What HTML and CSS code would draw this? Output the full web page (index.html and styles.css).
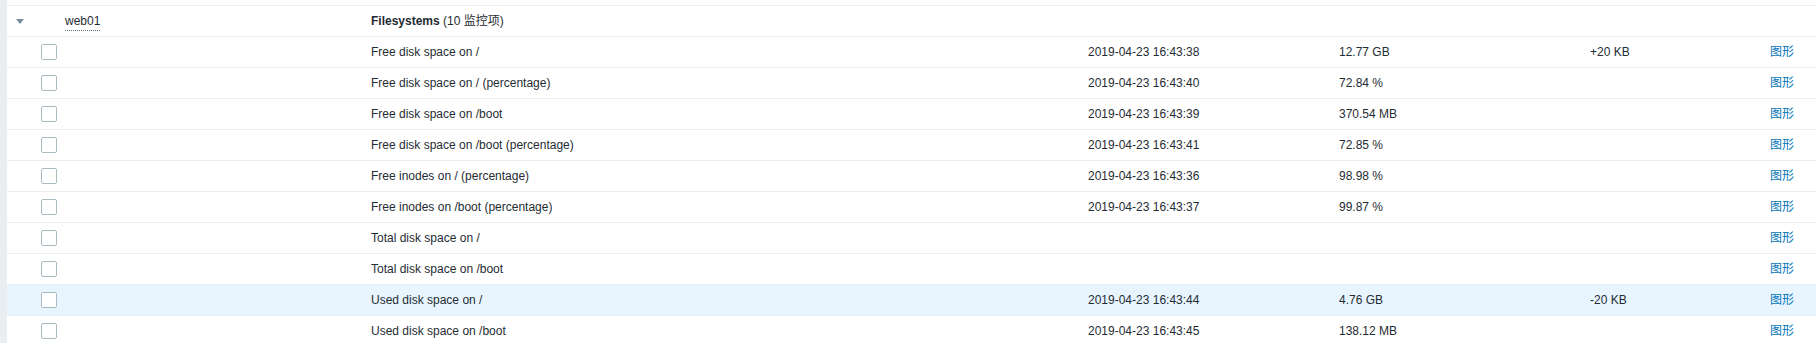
FILE: index.html
```html
<!DOCTYPE html>
<html>
<head>
<meta charset="utf-8">
<link rel="stylesheet" href="styles.css">
</head>
<body>
<div class="page">
  <div class="content">
    <table class="list">
      <colgroup>
        <col class="c-toggle"><col class="c-check"><col class="c-host"><col class="c-name"><col class="c-time"><col class="c-value"><col class="c-change"><col class="c-graph">
      </colgroup>
      <tbody>
        <tr class="group">
          <td><span class="arrow-down"></span></td>
          <td></td>
          <td><span class="link-action">web01</span></td>
          <td><b>Filesystems</b> (10 监控项)</td>
          <td></td><td></td><td></td><td></td>
        </tr>
        <tr><td></td><td><span class="checkbox"></span></td><td></td><td>Free disk space on /</td><td>2019-04-23 16:43:38</td><td>12.77 GB</td><td>+20 KB</td><td><a class="link">图形</a></td></tr>
        <tr><td></td><td><span class="checkbox"></span></td><td></td><td>Free disk space on / (percentage)</td><td>2019-04-23 16:43:40</td><td>72.84 %</td><td></td><td><a class="link">图形</a></td></tr>
        <tr><td></td><td><span class="checkbox"></span></td><td></td><td>Free disk space on /boot</td><td>2019-04-23 16:43:39</td><td>370.54 MB</td><td></td><td><a class="link">图形</a></td></tr>
        <tr><td></td><td><span class="checkbox"></span></td><td></td><td>Free disk space on /boot (percentage)</td><td>2019-04-23 16:43:41</td><td>72.85 %</td><td></td><td><a class="link">图形</a></td></tr>
        <tr><td></td><td><span class="checkbox"></span></td><td></td><td>Free inodes on / (percentage)</td><td>2019-04-23 16:43:36</td><td>98.98 %</td><td></td><td><a class="link">图形</a></td></tr>
        <tr><td></td><td><span class="checkbox"></span></td><td></td><td>Free inodes on /boot (percentage)</td><td>2019-04-23 16:43:37</td><td>99.87 %</td><td></td><td><a class="link">图形</a></td></tr>
        <tr><td></td><td><span class="checkbox"></span></td><td></td><td>Total disk space on /</td><td></td><td></td><td></td><td><a class="link">图形</a></td></tr>
        <tr><td></td><td><span class="checkbox"></span></td><td></td><td>Total disk space on /boot</td><td></td><td></td><td></td><td><a class="link">图形</a></td></tr>
        <tr class="hover"><td></td><td><span class="checkbox"></span></td><td></td><td>Used disk space on /</td><td>2019-04-23 16:43:44</td><td>4.76 GB</td><td>-20 KB</td><td><a class="link">图形</a></td></tr>
        <tr><td></td><td><span class="checkbox"></span></td><td></td><td>Used disk space on /boot</td><td>2019-04-23 16:43:45</td><td>138.12 MB</td><td></td><td><a class="link">图形</a></td></tr>
      </tbody>
    </table>
  </div>
</div>
</body>
</html>
```
FILE: styles.css
```css
html, body {
  margin: 0;
  padding: 0;
  background: #ebeef0;
}
body {
  font-family: Arial, "Liberation Sans", "Noto Sans CJK SC", sans-serif;
  font-size: 12px;
  color: #1f2c33;
}
.page {
  display: flex;
  height: 343px;
  overflow: hidden;
}
.content {
  margin-left: 7px;
  flex: 1;
  background: #fff;
  padding-top: 5px;
}
.list {
  width: 100%;
  table-layout: fixed;
  border-collapse: collapse;
  border-spacing: 0;
}
.c-toggle { width: 29px; }
.c-check { width: 24px; }
.c-host { width: 306px; }
.c-name { width: 717px; }
.c-time { width: 251px; }
.c-value { width: 251px; }
.c-change { width: 180px; }
.c-graph { width: 51px; }

.list tr {
  border-top: 1px solid #ebeef0;
  height: 31px;
}
.list td {
  padding: 0 5px;
  height: 30px;
  vertical-align: middle;
  white-space: nowrap;
  overflow: hidden;
  line-height: 14px;
}
.list tr.hover {
  background: #e8f5ff;
}
.list tr.group td:first-child {
  padding-left: 9px;
}
.arrow-down {
  display: block;
  width: 0;
  height: 0;
  border-top: 5px solid #768d99;
  border-left: 4px solid transparent;
  border-right: 4px solid transparent;
  margin-top: 1px;
}
.checkbox {
  display: block;
  width: 14px;
  height: 14px;
  border: 1px solid #acbbc2;
  border-radius: 2px;
  background: #fff;
}
.link-action {
  border-bottom: 1px dotted #5a6a73;
  padding-bottom: 2px;
}
.link {
  color: #0275b8;
  text-decoration: none;
}
```
